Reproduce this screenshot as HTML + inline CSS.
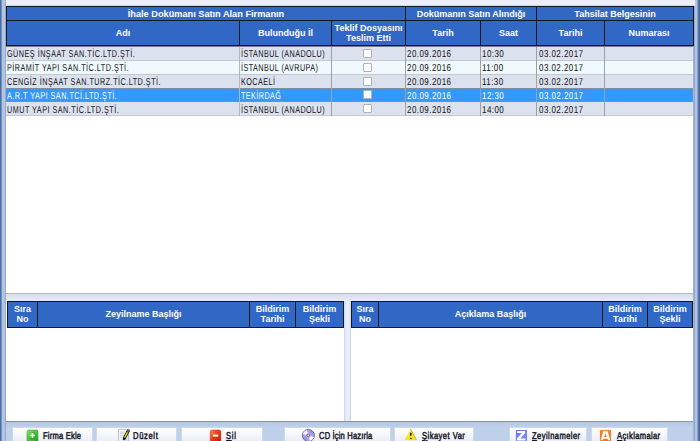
<!DOCTYPE html>
<html><head><meta charset="utf-8">
<style>
*{margin:0;padding:0;box-sizing:border-box}
html,body{width:700px;height:441px;overflow:hidden}
body{position:relative;background:#eceff7;font-family:"Liberation Sans",sans-serif}
.a{position:absolute}
.hd{position:absolute;background:#3168c6;color:#fff;font-weight:bold;font-size:9px;text-align:center;line-height:9.5px;white-space:nowrap}
.bl{position:absolute;background:#101820}
.t{position:absolute;font-size:10px;line-height:14px;white-space:nowrap;transform-origin:0 0;text-rendering:geometricPrecision}
.vs{position:absolute;width:1px;background:#9ca0aa}
.cb{position:absolute;width:9px;height:9px;background:#fff;border:1px solid #b0b2b8;border-radius:1px}
.btn{position:absolute;top:427px;height:16px;border:1px solid #d0d8ea;border-bottom:none;border-radius:1px;background:linear-gradient(#ffffff,#f2f4fa 60%,#e6eaf4)}
.bt{position:absolute;top:430.6px;text-rendering:geometricPrecision;font-size:10px;color:#1a1a2a;-webkit-text-stroke:0.5px #1a1a2a;line-height:12px;white-space:nowrap;transform-origin:0 0}
</style></head><body>

<div class="a" style="left:0;top:0;width:1px;height:441px;background:#4570a8"></div>
<div class="a" style="left:1px;top:0;width:1px;height:441px;background:#7290c0"></div>
<div class="a" style="left:2px;top:0;width:3px;height:441px;background:#b4c4dc"></div>
<div class="a" style="left:5px;top:0;width:1px;height:441px;background:#98a8d4"></div>
<div class="a" style="left:693px;top:0;width:1px;height:441px;background:#a4b2d8"></div>
<div class="a" style="left:694px;top:6px;width:1px;height:435px;background:#92a6d0"></div>
<div class="a" style="left:693px;top:0;width:2px;height:6px;background:#eceff7"></div>
<div class="a" style="left:695px;top:0;width:2px;height:441px;background:#b4c4dc"></div>
<div class="a" style="left:697px;top:0;width:1px;height:441px;background:#8ca2c8"></div>
<div class="a" style="left:698px;top:0;width:1px;height:441px;background:#5878b0"></div>
<div class="a" style="left:699px;top:0;width:1px;height:441px;background:#3e64a0"></div>
<div class="a" style="left:6px;top:6px;width:687px;height:288px;background:#fff"></div>

<div class="bl" style="left:6px;top:6px;width:688px;height:40px"></div>
<div class="a" style="left:6px;top:5px;width:688px;height:1px;background:#d0d6e6"></div>
<div class="hd" style="left:7px;top:7px;width:398px;height:13px;line-height:15px;font-size:9.2px;">İhale Dokümanı Satın Alan Firmanın</div>
<div class="hd" style="left:406px;top:7px;width:130px;height:13px;line-height:15px;">Dokümanın Satın Alındığı</div>
<div class="hd" style="left:537px;top:7px;width:156px;height:13px;line-height:15px;">Tahsilat Belgesinin</div>
<div class="hd" style="left:7px;top:21px;width:232px;height:24px;line-height:24px;">Adı</div>
<div class="hd" style="left:240px;top:21px;width:91px;height:24px;line-height:24px;">Bulunduğu İl</div>
<div class="hd" style="left:332px;top:21px;width:73px;height:24px;padding-top:3px;">Teklif Dosyasını<br>Teslim Etti</div>
<div class="hd" style="left:406px;top:21px;width:74px;height:24px;line-height:24px;">Tarih</div>
<div class="hd" style="left:481px;top:21px;width:55px;height:24px;line-height:24px;">Saat</div>
<div class="hd" style="left:537px;top:21px;width:67px;height:24px;line-height:24px;">Tarihi</div>
<div class="hd" style="left:605px;top:21px;width:88px;height:24px;line-height:24px;">Numarası</div>
<div class="a" style="left:6px;top:46px;width:687px;height:1px;background:#767c88"></div>
<div class="a" style="left:6px;top:47px;width:687px;height:13px;background:#dce1ee"></div>
<div class="a" style="left:6px;top:60px;width:687px;height:1px;background:#c4c8d2"></div>
<span class="t" style="left:7px;top:48px;color:#111;transform:scaleX(0.72);letter-spacing:0.7px">GÜNEŞ İNŞAAT SAN.TİC.LTD.ŞTİ.</span>
<span class="t" style="left:241px;top:48px;color:#111;transform:scaleX(0.72);letter-spacing:0.62px">İSTANBUL (ANADOLU)</span>
<span class="t" style="left:407px;top:48px;color:#111;transform:scaleX(0.8);letter-spacing:0.55px">20.09.2016</span>
<span class="t" style="left:482px;top:48px;color:#111;transform:scaleX(0.8);letter-spacing:0.55px">10:30</span>
<span class="t" style="left:538.5px;top:48px;color:#111;transform:scaleX(0.8);letter-spacing:0.55px">03.02.2017</span>
<div class="a" style="left:6px;top:61px;width:687px;height:13px;background:#f0f9fc"></div>
<div class="a" style="left:6px;top:74px;width:687px;height:1px;background:#c4c8d2"></div>
<span class="t" style="left:7px;top:62px;color:#111;transform:scaleX(0.72);letter-spacing:0.7px">PİRAMİT YAPI SAN.TİC.LTD.ŞTİ.</span>
<span class="t" style="left:241px;top:62px;color:#111;transform:scaleX(0.72);letter-spacing:0.62px">İSTANBUL (AVRUPA)</span>
<span class="t" style="left:407px;top:62px;color:#111;transform:scaleX(0.8);letter-spacing:0.55px">20.09.2016</span>
<span class="t" style="left:482px;top:62px;color:#111;transform:scaleX(0.8);letter-spacing:0.55px">11:00</span>
<span class="t" style="left:538.5px;top:62px;color:#111;transform:scaleX(0.8);letter-spacing:0.55px">03.02.2017</span>
<div class="a" style="left:6px;top:75px;width:687px;height:13px;background:#dce1ee"></div>
<span class="t" style="left:7px;top:76px;color:#111;transform:scaleX(0.72);letter-spacing:0.7px">CENGİZ İNŞAAT SAN.TURZ.TİC.LTD.ŞTİ.</span>
<span class="t" style="left:241px;top:76px;color:#111;transform:scaleX(0.72);letter-spacing:0.62px">KOCAELİ</span>
<span class="t" style="left:407px;top:76px;color:#111;transform:scaleX(0.8);letter-spacing:0.55px">20.09.2016</span>
<span class="t" style="left:482px;top:76px;color:#111;transform:scaleX(0.8);letter-spacing:0.55px">11:30</span>
<span class="t" style="left:538.5px;top:76px;color:#111;transform:scaleX(0.8);letter-spacing:0.55px">03.02.2017</span>
<div class="a" style="left:6px;top:88px;width:687px;height:14px;background:#3399ff;border:1px dotted #c08848"></div>
<span class="t" style="left:7px;top:90px;color:#fff;transform:scaleX(0.72);letter-spacing:0.7px">A.R.T YAPI SAN.TCİ.LTD.ŞTİ.</span>
<span class="t" style="left:241px;top:90px;color:#fff;transform:scaleX(0.72);letter-spacing:0.62px">TEKİRDAĞ</span>
<span class="t" style="left:407px;top:90px;color:#fff;transform:scaleX(0.8);letter-spacing:0.55px">20.09.2016</span>
<span class="t" style="left:482px;top:90px;color:#fff;transform:scaleX(0.8);letter-spacing:0.55px">12:30</span>
<span class="t" style="left:538.5px;top:90px;color:#fff;transform:scaleX(0.8);letter-spacing:0.55px">03.02.2017</span>
<div class="a" style="left:6px;top:102px;width:687px;height:13px;background:#dce1ee"></div>
<div class="a" style="left:6px;top:115px;width:687px;height:1px;background:#c4c8d2"></div>
<span class="t" style="left:7px;top:104px;color:#111;transform:scaleX(0.72);letter-spacing:0.7px">UMUT YAPI SAN.TİC.LTD.ŞTİ.</span>
<span class="t" style="left:241px;top:104px;color:#111;transform:scaleX(0.72);letter-spacing:0.62px">İSTANBUL (ANADOLU)</span>
<span class="t" style="left:407px;top:104px;color:#111;transform:scaleX(0.8);letter-spacing:0.55px">20.09.2016</span>
<span class="t" style="left:482px;top:104px;color:#111;transform:scaleX(0.8);letter-spacing:0.55px">14:00</span>
<span class="t" style="left:538.5px;top:104px;color:#111;transform:scaleX(0.8);letter-spacing:0.55px">03.02.2017</span>
<div class="vs" style="left:239px;top:47px;height:69px;background:#b4b8c4"></div>
<div class="vs" style="left:331px;top:47px;height:69px;"></div>
<div class="vs" style="left:405px;top:47px;height:69px;"></div>
<div class="vs" style="left:480px;top:47px;height:69px;"></div>
<div class="vs" style="left:536px;top:47px;height:69px;"></div>
<div class="vs" style="left:604px;top:47px;height:69px;"></div>
<div class="cb" style="left:363px;top:49px"></div>
<div class="cb" style="left:363px;top:63px"></div>
<div class="cb" style="left:363px;top:77px"></div>
<div class="cb" style="left:363px;top:90px"></div>
<div class="cb" style="left:363px;top:104px"></div>
<div class="a" style="left:6px;top:293px;width:687px;height:1px;background:#b4b8c2"></div>
<div class="a" style="left:6px;top:294px;width:687px;height:7px;background:linear-gradient(#d6deee,#e6ebf6)"></div>
<div class="a" style="left:6px;top:301px;width:338px;height:120px;background:#fff"></div>
<div class="bl" style="left:7px;top:301px;width:337px;height:27px"></div>
<div class="hd" style="left:8px;top:302px;width:29px;height:25px;padding-top:3px;">Sıra<br>No</div>
<div class="hd" style="left:38px;top:302px;width:211px;height:25px;line-height:24px;">Zeyilname Başlığı</div>
<div class="hd" style="left:250px;top:302px;width:45px;height:25px;padding-top:3px;">Bildirim<br>Tarihi</div>
<div class="hd" style="left:296px;top:302px;width:47px;height:25px;padding-top:3px;">Bildirim<br>Şekli</div>
<div class="a" style="left:344px;top:301px;width:7px;height:120px;background:linear-gradient(90deg,#ccd4e8,#e8ecf8 30%,#eaeef8 70%,#ccd4e8)"></div>
<div class="a" style="left:351px;top:301px;width:342px;height:120px;background:#fff"></div>
<div class="bl" style="left:351px;top:301px;width:342px;height:27px"></div>
<div class="hd" style="left:352px;top:302px;width:26px;height:25px;padding-top:3px;">Sıra<br>No</div>
<div class="hd" style="left:379px;top:302px;width:223px;height:25px;line-height:24px;">Açıklama Başlığı</div>
<div class="hd" style="left:603px;top:302px;width:44px;height:25px;padding-top:3px;">Bildirim<br>Tarihi</div>
<div class="hd" style="left:648px;top:302px;width:44px;height:25px;padding-top:3px;">Bildirim<br>Şekli</div>
<div class="a" style="left:6px;top:421px;width:687px;height:1px;background:#8c94a4"></div>
<div class="a" style="left:6px;top:422px;width:687px;height:19px;background:linear-gradient(#b4c6e2,#bed0ea 5px)"></div>
<div class="btn" style="left:12px;width:81px"></div>
<div class="btn" style="left:96px;width:81px"></div>
<div class="btn" style="left:181px;width:82px"></div>
<div class="btn" style="left:284px;width:107px"></div>
<div class="btn" style="left:394px;width:80px"></div>
<div class="btn" style="left:509px;width:78px"></div>
<div class="btn" style="left:591px;width:77px"></div>
<span class="bt" style="left:42.5px;transform:scaleX(0.76);letter-spacing:0.25px">Firma Ekle</span>
<span class="bt" style="left:133px;transform:scaleX(0.76);letter-spacing:0.85px">Düzelt</span>
<span class="bt" style="left:226px;transform:scaleX(0.76);letter-spacing:0.95px"><u>S</u>il</span>
<span class="bt" style="left:319px;transform:scaleX(0.76);letter-spacing:0.2px">CD İçin Hazırla</span>
<span class="bt" style="left:421.5px;transform:scaleX(0.76);letter-spacing:0.6px"><u>Ş</u>ikayet Var</span>
<span class="bt" style="left:532px;transform:scaleX(0.76);letter-spacing:0.55px"><u>Z</u>eyilnameler</span>
<span class="bt" style="left:616.5px;transform:scaleX(0.76);letter-spacing:0.45px"><u>A</u>çıklamalar</span>
<svg class="a" style="left:0;top:0" width="700" height="441" viewBox="0 0 700 441">
<defs>
<linearGradient id="gg" x1="0" y1="0" x2="1" y2="1"><stop offset="0" stop-color="#90e070"/><stop offset="0.45" stop-color="#3cc02c"/><stop offset="1" stop-color="#0c900c"/></linearGradient>
<linearGradient id="rg" x1="0" y1="0" x2="1" y2="1"><stop offset="0" stop-color="#ff9068"/><stop offset="0.45" stop-color="#f03a08"/><stop offset="1" stop-color="#b81c00"/></linearGradient>
<linearGradient id="yg" x1="0" y1="0" x2="0" y2="1"><stop offset="0" stop-color="#fff060"/><stop offset="1" stop-color="#f4e000"/></linearGradient>
<linearGradient id="zg" x1="0" y1="0" x2="1" y2="1"><stop offset="0" stop-color="#6878f0"/><stop offset="1" stop-color="#7c8cf8"/></linearGradient>
<linearGradient id="ag" x1="0" y1="0" x2="0" y2="1"><stop offset="0" stop-color="#f48430"/><stop offset="1" stop-color="#ec7018"/></linearGradient>
<linearGradient id="ng" x1="0" y1="0" x2="1" y2="1"><stop offset="0" stop-color="#ffffff"/><stop offset="0.5" stop-color="#eef4fc"/><stop offset="1" stop-color="#b8d8f8"/></linearGradient>
</defs>
<rect x="27" y="430" width="11" height="12" rx="1.8" fill="url(#gg)" stroke="#22962a" stroke-width="0.5"/>
<rect x="28.2" y="431.2" width="8.6" height="9" rx="1" fill="none" stroke="#a8e890" stroke-width="0.6" opacity="0.6"/><rect x="30.1" y="434.6" width="4.8" height="1.6" fill="#fff"/><rect x="31.7" y="433" width="1.6" height="4.8" fill="#fff"/>
<rect x="118.6" y="429.3" width="9.8" height="12.5" fill="url(#ng)" stroke="#a8b0d8" stroke-width="0.8"/>
<path d="M120 432.1h4.6M120 433.8h4.6M120 435.6h4.6M120 437.3h4.6" stroke="#c4c8d0" stroke-width="0.8"/>
<path d="M124.2 438.6 L128.3 430.8" stroke="#1c1c1c" stroke-width="3" stroke-linecap="round"/>
<path d="M124.9 437.2 L127.4 432.4" stroke="#f4e400" stroke-width="1.3" stroke-linecap="round"/>
<circle cx="127.9" cy="431.3" r="1.25" fill="#187828"/>
<circle cx="128.5" cy="429.7" r="1" fill="#c860c8"/>
<rect x="210.3" y="430" width="10.5" height="12" rx="1.8" fill="url(#rg)" stroke="#b02000" stroke-width="0.5"/>
<rect x="212.9" y="434.6" width="5.4" height="2" fill="#fff"/>
<circle cx="308.4" cy="435.5" r="6" fill="#a8aaf0" stroke="#56567e" stroke-width="0.9"/>
<path d="M308.4 435.5 L302.8 433.9 A5.8 5.8 0 0 1 306.8 429.9 Z" fill="#ffffff" opacity="0.95"/>
<path d="M308.4 435.5 L314 437.1 A5.8 5.8 0 0 1 310 441.1 Z" fill="#ffffff" opacity="0.95"/>
<path d="M308.4 435.5 L310 429.9 A5.8 5.8 0 0 1 314 433.9 Z" fill="#8088f0" opacity="0.5"/>
<path d="M308.4 435.5 L306.8 441.1 A5.8 5.8 0 0 1 302.8 437.1 Z" fill="#8088f0" opacity="0.5"/>
<circle cx="308.4" cy="435.5" r="2.1" fill="none" stroke="#f0a8e8" stroke-width="1"/>
<circle cx="308.4" cy="435.5" r="1.2" fill="#ffffff" stroke="#4a4a6a" stroke-width="0.8"/>
<path d="M410.8 429.2 L416.4 439.8 L405.2 439.8 Z" fill="url(#yg)" stroke="#f0e000" stroke-width="0.5" stroke-linejoin="round"/>
<path d="M410.8 429.6 L416.4 439.8" stroke="#6a6440" stroke-width="0.6" opacity="0.7"/>
<path d="M409.9 432.8 H411.7 L411.3 436 H410.3 Z" fill="#1a1a1a"/><rect x="410.1" y="437.8" width="1.4" height="1.3" fill="#1a1a1a"/>
<rect x="515.9" y="430" width="11.1" height="12" fill="url(#zg)"/>
<path d="M517.2 431.1 H525.1 V432.9 L520.4 438.6 H525.4 V440.4 H517 V438.5 L521.8 432.9 H517.2 Z" fill="#fff"/>
<rect x="599.9" y="430" width="11.1" height="12" fill="url(#ag)"/>
<path d="M603.4 431.1 H607.5 L610.4 440.2 H608.1 L607.5 438.7 H603.5 L602.9 440.2 H600.6 Z M604.1 437 H606.9 L605.5 433.2 Z" fill="#fff" fill-rule="evenodd"/>
</svg>
</body></html>
